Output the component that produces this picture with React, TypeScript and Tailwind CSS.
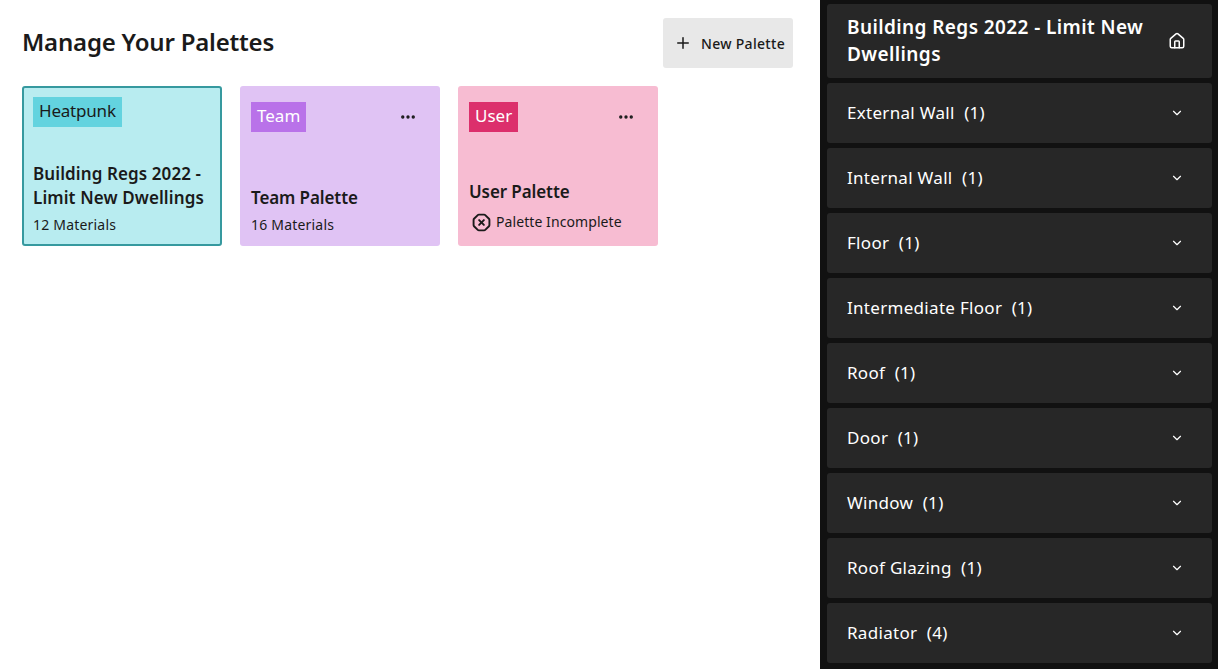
import { ChevronDown, House, Ellipsis, Plus, OctagonX } from 'lucide-react';

const sections = [
  ['External Wall', 1],
  ['Internal Wall', 1],
  ['Floor', 1],
  ['Intermediate Floor', 1],
  ['Roof', 1],
  ['Door', 1],
  ['Window', 1],
  ['Roof Glazing', 1],
  ['Radiator', 4],
] as const;

export default function App() {
  return (
    <div className="flex h-[669px] w-[1218px] overflow-hidden bg-white font-['Noto_Sans',sans-serif] text-[#1a1a1a]">
      <main className="w-[820px] shrink-0 pl-[22px] pr-[27px] pt-[18px]">
        <div className="flex h-[50px] items-center justify-between">
          <h1 className="pb-[2px] text-[24px] font-semibold tracking-[-0.2px]">Manage Your Palettes</h1>
          <button className="flex h-[50px] w-[130px] items-center gap-[9px] rounded-[3px] bg-[#e8e8e8] pl-[11px] text-[14px] font-medium tracking-[0.3px]">
            <Plus className="h-[18px] w-[18px] shrink-0" strokeWidth={2} />
            New Palette
          </button>
        </div>

        <div className="mt-[18px] flex gap-[18px]">
          {/* Default palette, selected */}
          <div className="flex h-[160px] w-[200px] flex-col rounded-[3px] border-2 border-[#36999f] bg-[#b8ecf0] px-[9px] pt-[9px]">
            <span className="flex h-[30px] w-fit items-center bg-[#63d3df] px-[6px] pb-[2px] text-[17px] tracking-[-0.2px]">Heatpunk</span>
            <div className="mt-[35px] text-[17px] font-semibold leading-[24px] tracking-[0.1px]">Building Regs 2022 - Limit New Dwellings</div>
            <div className="mt-[2px] text-[14px] leading-[25px] tracking-[0.2px]">12 Materials</div>
          </div>

          <div className="flex h-[160px] w-[200px] flex-col rounded-[3px] bg-[#e0c3f4] px-[11px] pt-[16px]">
            <div className="flex items-center justify-between">
              <span className="flex h-[30px] w-fit items-center bg-[#b972e9] px-[6px] pb-[2px] text-[17px] text-white">Team</span>
              <Ellipsis className="mr-[12px] h-[18px] w-[18px]" strokeWidth={2.5} />
            </div>
            <div className="mt-[53px] text-[17px] font-semibold leading-[25px] tracking-[-0.1px]">Team Palette</div>
            <div className="mt-[2px] text-[14px] leading-[25px] tracking-[0.2px]">16 Materials</div>
          </div>

          <div className="flex h-[160px] w-[200px] flex-col rounded-[3px] bg-[#f7bcd2] px-[11px] pt-[16px]">
            <div className="flex items-center justify-between">
              <span className="flex h-[30px] w-fit items-center bg-[#dc2f6c] px-[6px] pb-[2px] text-[17px] text-white">User</span>
              <Ellipsis className="mr-[12px] h-[18px] w-[18px]" strokeWidth={2.5} />
            </div>
            <div className="mt-[47px] text-[17px] font-semibold leading-[25px] tracking-[-0.1px]">User Palette</div>
            <div className="mt-[8px] flex items-center gap-[5px] pl-[3px] text-[14px] leading-[20px] tracking-[0.08px]">
              <OctagonX className="h-[19px] w-[19px] shrink-0" strokeWidth={2.4} />
              Palette Incomplete
            </div>
          </div>
        </div>
      </main>

      <aside className="flex w-[398px] shrink-0 flex-col gap-[5px] bg-[#111111] pl-[7px] pr-[6px] pt-[4px] text-white">
        <div className="flex h-[74px] items-center justify-between rounded-[3px] bg-[#272727] pl-[20px] pr-[26px]">
          <div className="w-[315px] text-[19px] font-semibold leading-[27px] tracking-[0.4px]">Building Regs 2022 - Limit New Dwellings</div>
          <House className="h-[18px] w-[18px] shrink-0" strokeWidth={2} />
        </div>
        {sections.map(([name, count]) => (
          <div key={name} className="flex h-[60px] shrink-0 items-center justify-between rounded-[3px] bg-[#272727] pl-[20px] pr-[28px] text-[17px] tracking-[0.3px]">
            <span className="whitespace-pre">{name}  ({count})</span>
            <ChevronDown className="h-[14px] w-[14px]" strokeWidth={2} />
          </div>
        ))}
      </aside>
    </div>
  );
}
